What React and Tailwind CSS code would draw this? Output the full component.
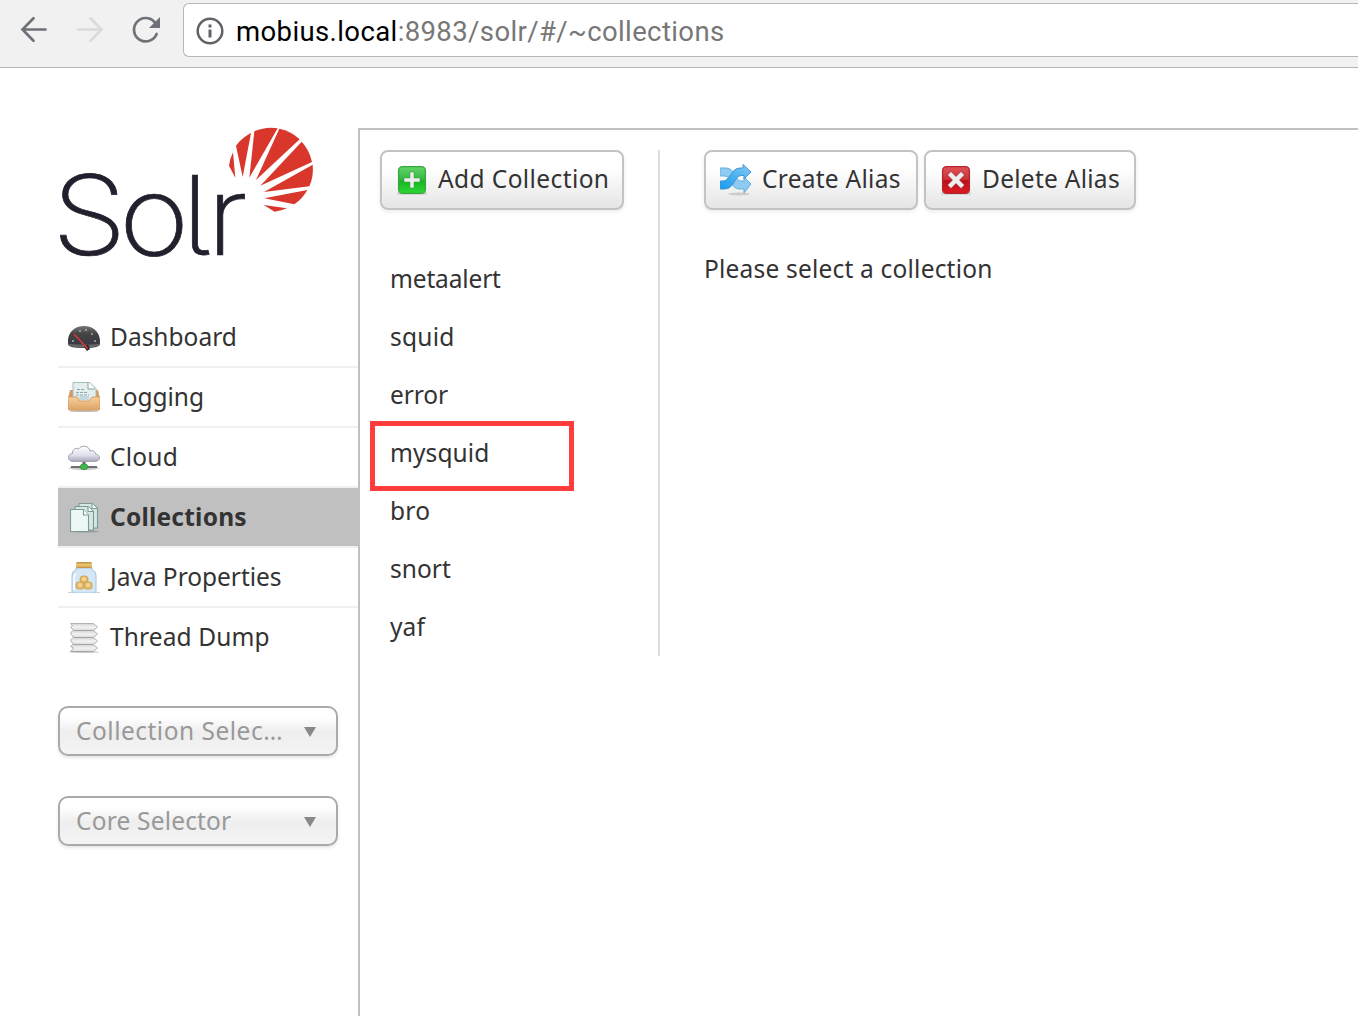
function Logo() {
  return (
    <svg className="-mb-[45px] -ml-2 -mt-[13px] block h-[200px] w-[280px] shrink-0" viewBox="0 0 280 200" role="img" aria-label="Solr">
      <text
        transform="translate(0 140) scale(1.1 1.015)"
        x="1.9 62.700 119.600 142.600"
        y="0"
        fill="#231f2d"
        stroke="#231f2d"
        strokeWidth="0.7"
        fontFamily="Inter"
        fontWeight="200"
        fontSize="109"
        style={{ fontFeatureSettings: '"cv05"' }}
      >
        Solr
      </text>
      <g fill="#d9372c" transform="scale(.33333)">
        <path d="M549 112 556 188 537 152A126 126 0 0 1 549 112Z" />
        <path d="M558 92A126 126 0 0 1 603 54L578 186Z" />
        <path d="M613 49A126 126 0 0 1 683 40L598 188Z" />
        <path d="M688 41A126 126 0 0 1 749 73L618 195Z" />
        <path d="M755 80A126 126 0 0 1 786 141L631 212Z" />
        <path d="M788 149A126 126 0 0 1 778 214L642 231Z" />
        <path d="M772 225A126 126 0 0 1 733 268L643 250Z" />
        <path d="M711 280A126 126 0 0 1 674 290L641 270Z" />
      </g>
    </svg>
  );
}

function DashboardIcon() {
  return (
    <svg className="size-8" viewBox="0 0 32 32">
      <defs><linearGradient id="dash" x2="0" y2="1"><stop stopColor="#777" /><stop offset=".35" stopColor="#444" /><stop offset="1" stopColor="#353545" /></linearGradient></defs>
      <path d="M0 23C-1 13 5 5 16 5s17 8 16 18c0 3-7 4-16 4S0 26 0 23Z" fill="url(#dash)" />
      <path d="M0 22.500c3 1.500 28 1.500 32 0v.5c-1 5-31 5-32 0Z" fill="#666" />
      <g fill="#aaa"><circle cx="5" cy="20" r="1" /><circle cx="12" cy="10" r="1" /><circle cx="18" cy="9" r="1" /><circle cx="24" cy="13" r="1" /><circle cx="27" cy="20" r="1" /></g>
      <path d="m16 26 4-3 2 5-3 2Z" fill="#2b2b2b" />
      <path d="m6 13 13.500 14.500" stroke="#d93636" strokeWidth="1.700" />
    </svg>
  );
}

function LoggingIcon() {
  return (
    <svg className="size-8" viewBox="0 1 32 32">
      <defs><linearGradient id="tray" x2="0" y2="1"><stop stopColor="#f8cf9c" /><stop offset="1" stopColor="#dda365" /></linearGradient></defs>
      <ellipse cx="16" cy="31" rx="15" ry="1" fill="#bbb" />
      <path d="M2 10h28l2 9v9q0 2-2 2H2q-2 0-2-2v-9Z" fill="#d49b60" />
      <path d="M5 2.500h17l6 6V24H5Z" fill="#e3efee" stroke="#a6bebd" />
      <path d="M20 2v7h7" fill="#fff" stroke="#83a29f" />
      <path d="M9 9.500h8M8 12.500h12M8 15h13" stroke="#8ea9ad" strokeDasharray="3 1" />
      <path d="M0 17h9l3 4h9l3-4h8v11q0 2-2 2H2q-2 0-2-2Z" fill="url(#tray)" stroke="#d79e62" />
      <path d="M11 16h10v4h-9Z" fill="#c4d9dd" />
    </svg>
  );
}

function CloudIcon() {
  return (
    <svg className="size-8" viewBox="0 1 32 32">
      <defs><linearGradient id="cloud" x2="0" y2="1"><stop stopColor="#fff" /><stop offset=".6" stopColor="#dedfea" /><stop offset="1" stopColor="#a5a6b8" /></linearGradient></defs>
      <ellipse cx="16" cy="28" rx="15" ry="2" fill="#ccc" />
      <path d="M3 27h26" stroke="#555" strokeWidth="1.600" />
      <path d="M16 20v6" stroke="#666" strokeWidth="3" />
      <path d="M5 21.500C-1 21-1 14 4.500 13.500 4 8.500 9 7.500 10.500 9 13 5 21 5 22 11c3-1 5 0 5.500 3C33 15 33 21 27 21.500Z" fill="url(#cloud)" stroke="#a3a4b2" />
      <ellipse cx="16" cy="26.800" rx="3.800" ry="3" fill="#42b94b" stroke="#38853d" strokeWidth=".7" />
    </svg>
  );
}

function CollectionsIcon() {
  return (
    <svg className="size-8" viewBox="0 0 32 32">
      <ellipse cx="17" cy="30.500" rx="14" ry="1" fill="#999" />
      <g fill="#d5e6e3" stroke="#7c9a96" strokeWidth="1.100" strokeLinejoin="round">
        <path d="M11 2.500h13l5.500 5V27H11Z" />
        <path d="M7 5.500h13l5.500 5V29H7Z" />
        <path d="M2.500 8.500h13l5 5.500v16.500h-18Z" fill="#edf7f5" />
        <path d="M24 2.500v5h5M20 5.500v5h5M15.500 8.500V14h5" fill="#fff" />
      </g>
    </svg>
  );
}

function JarIcon() {
  return (
    <svg className="size-8" viewBox="0 -1 32 32">
      <defs><linearGradient id="lid" x2="0" y2="1"><stop stopColor="#b98c3e" /><stop offset=".5" stopColor="#f1cb7a" /><stop offset="1" stopColor="#bd8d3e" /></linearGradient></defs>
      <ellipse cx="16" cy="30.500" rx="16" ry="1.500" fill="#ccc" />
      <path d="M8 6h16v2q4 1 4 5v16q0 2-3 2H7q-3 0-3-2V13q0-4 4-5Z" fill="#d5e7f4" stroke="#a4c5dd" />
      <path d="M8 12q-2 1-2 5v11" stroke="#fff" strokeWidth="1.500" fill="none" />
      <rect x="8" y="0" width="16" height="6" rx="1.500" fill="url(#lid)" />
      <g fill="#e3bb6c" stroke="#c79b4b" strokeWidth=".8"><rect x="12" y="14" width="8" height="7" rx="3" /><rect x="8" y="20" width="8" height="7" rx="2.500" /><rect x="16" y="20" width="8" height="7" rx="2.500" /></g>
      <g fill="#f3d690"><circle cx="16" cy="17" r="2" /><circle cx="12" cy="23" r="2" /><circle cx="20" cy="23" r="2" /></g>
    </svg>
  );
}

function ThreadIcon() {
  return (
    <svg className="size-8" viewBox="0 0 32 32">
      <defs><linearGradient id="fold" x2="0" y2="1"><stop stopColor="#d2d2d2" /><stop offset=".5" stopColor="#f2f2f2" /><stop offset="1" stopColor="#dcdcdc" /></linearGradient></defs>
      <ellipse cx="16" cy="31" rx="15" ry="1" fill="#ccc" />
      <g fill="url(#fold)" stroke="#b2b2b2" strokeWidth="1" strokeLinejoin="round">
        <path d="M5 23.500h20.500l4 3.500-4 3.500H2.500l3-3.500-3-1.500Z" />
        <path d="M5 16.500h20.500l4 3.500-4 3.500H5.500L2.500 19Z" />
        <path d="M5 9.500h20.500l4 3.500-4 3.500H5.500L2.500 12Z" />
        <path d="M2.500 2.500h23l4 3.500-4 3.500H5.500L2.500 6l2-1.500Z" />
      </g>
      <path d="M6 9.500h19M6 16.500h19M6 23.500h19M4 30.500h21" stroke="#a4a4a4" strokeWidth="1.200" />
    </svg>
  );
}

function SquareIcon({ type }) {
  const add = type === "add";
  return (
    <svg className="size-8" viewBox="0 0 32 32">
      <defs>
        <linearGradient id="green" x2="0" y2="1"><stop stopColor="#5fd367" /><stop offset=".48" stopColor="#38b845" /><stop offset=".52" stopColor="#18b326" /><stop offset="1" stopColor="#2ed934" /></linearGradient>
        <linearGradient id="red" x2="0" y2="1"><stop stopColor="#e0555b" /><stop offset=".48" stopColor="#c83138" /><stop offset=".52" stopColor="#bb0f18" /><stop offset="1" stopColor="#dc1c23" /></linearGradient>
      </defs>
      <path d="M1 28h30v3H1Z" fill="#ccc" opacity=".7" />
      <rect x="2.600" y="2.600" width="26.800" height="26.800" rx="4" fill={add ? "url(#green)" : "url(#red)"} stroke={add ? "#36a63d" : "#b3242b"} strokeWidth="1.300" />
      {add ? (
        <path d="M14 8h4v6h6v4h-6v6h-4v-6H8v-4h6Z" fill="#eee" stroke="#279a2f" strokeWidth=".5" />
      ) : (
        <path d="m11 7.500 5 5 5-5 3.500 3.500-5 5 5 5-3.500 3.500-5-5-5 5L7.500 21l5-5-5-5Z" fill="#eee" stroke="#8e1117" strokeWidth=".5" />
      )}
    </svg>
  );
}

function ShuffleIcon() {
  return (
    <svg className="size-8" viewBox="0 0 32 32">
      <defs><linearGradient id="blue" x1="0" y1="1" x2="1" y2="0"><stop stopColor="#159af0" /><stop offset=".5" stopColor="#4bb2ee" /><stop offset="1" stopColor="#82cafa" /></linearGradient></defs>
      <ellipse cx="19" cy="30" rx="11" ry="1.500" fill="#ccc" />
      <path d="M0 4h6c9 0 9 13 15 13h3v-4l7 7-7 9v-4h-5C11 25 11 12 5 12H0Z" fill="#8ecbf3" stroke="#6aaedd" />
      <path d="M0 25v-8h3c7 0 8-13 17-13h3V.5l8 7.500-7 7v-3.500h-3c-6 0-7 13.500-16 13.500Z" fill="url(#blue)" stroke="#4a94d0" />
    </svg>
  );
}

function ActionButton({ icon, label, className }) {
  return (
    <button className={`flex h-[60px] items-center rounded-[8px] border-2 border-[#c3c3c3] bg-linear-to-b from-white from-30% to-[#e5e5e5] shadow-[0_2px_4px_rgba(0,0,0,0.08)] ${className}`}>
      {icon}
      <span className="-mt-0.5 ml-[10px] whitespace-nowrap">{label}</span>
    </button>
  );
}

function Selector({ label, className }) {
  return (
    <div className="flex h-[50px] w-[280px] items-center justify-between rounded-[10px] border-2 border-[#aaa] bg-linear-to-b from-white from-20% via-[#eee] via-52% to-[#f4f4f4] pl-4 pr-5 text-[#999] shadow-[0_2px_3px_rgba(0,0,0,0.1)]">
      <span className={`whitespace-nowrap ${className}`}>{label}</span>
      <svg className="mt-0.5 h-[10px] w-3" viewBox="0 0 12 10"><path d="M0 0h12L6 10Z" fill="#888" /></svg>
    </div>
  );
}

const menu = [
  { label: "Dashboard", icon: <DashboardIcon />, cls: "tracking-[0px]" },
  { label: "Logging", icon: <LoggingIcon />, cls: "tracking-[-0.05px]" },
  { label: "Cloud", icon: <CloudIcon />, cls: "tracking-[0.23px]" },
  { label: "Collections", icon: <CollectionsIcon />, cls: "font-bold tracking-[0.22px]", active: true },
  { label: "Java Properties", icon: <JarIcon />, cls: "tracking-[-0.03px]" },
  { label: "Thread Dump", icon: <ThreadIcon />, cls: "tracking-[0.12px]" },
];

const collections = [
  { name: "metaalert", cls: "tracking-[-0.15px]" },
  { name: "squid", cls: "tracking-[0.25px]" },
  { name: "error", cls: "tracking-[-0.1px]" },
  { name: "mysquid", cls: "tracking-[0.08px]", marked: true },
  { name: "bro", cls: "tracking-[0.25px]" },
  { name: "snort", cls: "tracking-[0.05px]" },
  { name: "yaf", cls: "tracking-[0.1px]" },
];

function Toolbar() {
  return (
    <header className="flex h-[68px] items-start border-b border-[#b5b5b5] bg-[#f1f1f1]">
      <svg className="mt-[10px] h-10 w-[183px] shrink-0" viewBox="0 10 183 40" fill="none" strokeWidth="2.700" strokeLinecap="round">
        <path d="M45.500 29.500H22.500M33.500 18.200 22.500 29.500l11 11.300" stroke="#6e7177" />
        <path d="M78 29.500h23.500M90.500 18.200l11 11.300-11 11.300" stroke="#d8dadb" />
        <path d="M156.600 34A11.700 11.700 0 1 1 154.500 22" stroke="#6e7177" />
        <path d="M160 17v11h-11Z" fill="#6e7177" />
      </svg>
      <div className="mt-[3px] flex h-[54px] flex-1 items-center rounded-l-[6px] border border-r-0 border-[#b5b7b9] bg-white pl-3">
        <svg className="mt-px size-7" viewBox="0 0 28 28">
          <circle cx="14" cy="14" r="12.300" fill="none" stroke="#5f6368" strokeWidth="2.500" />
          <path d="M12.500 7.500h3v3h-3ZM12.500 12.500h3v8h-3Z" fill="#5f6368" />
        </svg>
        <span className="ml-3 mt-[3px] whitespace-nowrap font-[Roboto,sans-serif] text-[27.5px] leading-8 tracking-[0.39px] text-[#777]"><span className="text-black">mobius.local</span>:8983/solr/#/~collections</span>
      </div>
    </header>
  );
}

export default function App() {
  return (
    <div className="flex h-[1016px] w-full flex-col overflow-hidden bg-white font-['Noto_Sans',sans-serif] text-[24.5px] leading-8 text-[#333]">
      <Toolbar />
      <div className="flex min-h-0 flex-1 pl-[58px] pt-[60px]">
        <aside className="flex w-[300px] shrink-0 flex-col">
          <Logo />
          <nav className="mt-[38px]">
            {menu.map((m) => (
              <div key={m.label} className="h-[60px] border-b-2 border-[#f0f0f0] last:border-transparent">
                <a className={`flex h-[58px] items-center pl-[10px] ${m.active ? "bg-[#c0c0c0]" : ""}`}>
                  {m.icon}
                  <span className={`ml-[10px] whitespace-nowrap ${m.cls}`}>{m.label}</span>
                </a>
              </div>
            ))}
          </nav>
          <div className="mt-[38px] flex flex-col gap-10">
            <Selector label="Collection Selec…" className="tracking-[0.5px]" />
            <Selector label="Core Selector" className="tracking-[0.18px]" />
          </div>
        </aside>
        <main className="flex flex-1 items-start border-l-2 border-t-2 border-[#c0c0c0] pl-5 pt-5">
          <section className="h-[506px] w-[280px] shrink-0 border-r-2 border-[#ddd]">
            <ActionButton icon={<SquareIcon type="add" />} label="Add Collection" className="w-[244px] pl-[14px] tracking-[0.4px]" />
            <ul className="mt-10">
              {collections.map((c) => (
                <li key={c.name} className="relative flex h-[58px] items-center pl-[10px]">
                  <span className={c.cls}>{c.name}</span>
                  {c.marked && <span className="absolute -left-[10px] -top-[3px] h-[70px] w-[204px] border-5 border-[#ff3d3a]" />}
                </li>
              ))}
            </ul>
          </section>
          <section className="pl-11">
            <div className="flex gap-[6px]">
              <ActionButton icon={<ShuffleIcon />} label="Create Alias" className="w-[214px] pl-[14px] tracking-[0.27px]" />
              <ActionButton icon={<SquareIcon type="delete" />} label="Delete Alias" className="w-[212px] pl-[14px] tracking-[0.27px]" />
            </div>
            <p className="mt-[43px] whitespace-nowrap tracking-[0.2px]">Please select a collection</p>
          </section>
        </main>
      </div>
    </div>
  );
}
